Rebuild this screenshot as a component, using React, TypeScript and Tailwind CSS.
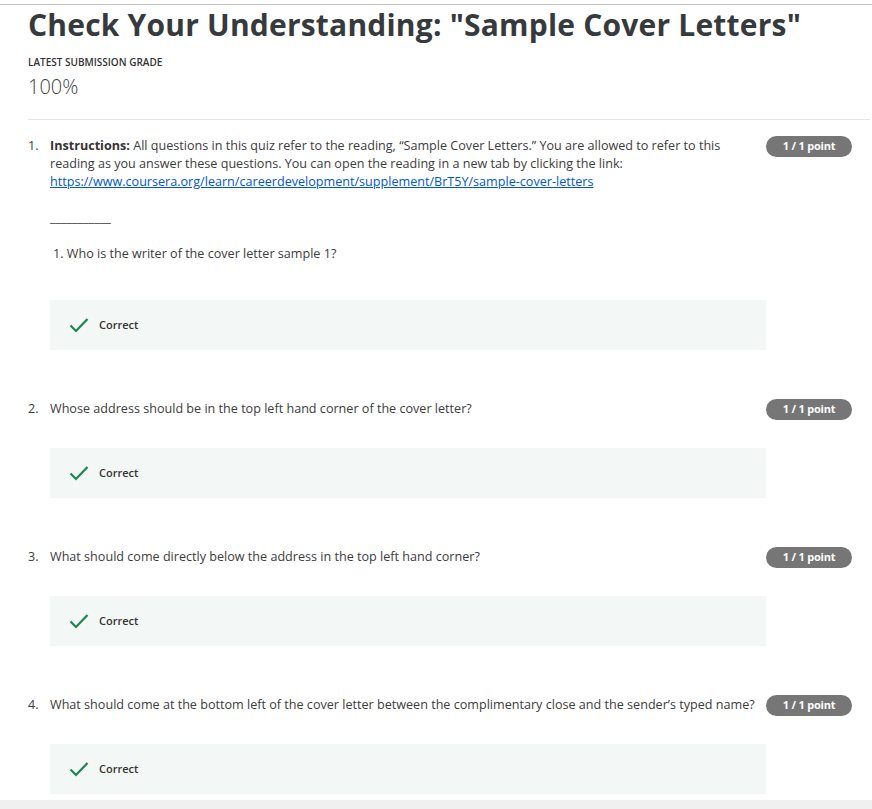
import React from "react";

const Check = () => (
  <svg width="20" height="16" viewBox="0 0 20 16" fill="none">
    <path d="M1.5 8.5 L7 14 L18.5 2" stroke="#1f8354" strokeWidth="2.2" />
  </svg>
);

const Badge = () => (
  <div className="shrink-0 w-[86px] h-[21px] rounded-full bg-[#767676] text-white text-[11px] font-bold flex items-center justify-center tracking-[-0.2px]">
    1 / 1 point
  </div>
);

const CorrectBox = () => (
  <div className="mt-[30px] h-[50px] bg-[#f3f8f6] flex items-center pl-[19px]">
    <Check />
    <span className="ml-[10px] text-[11px] font-semibold text-[#333]">Correct</span>
  </div>
);

const Question = ({ num, children }: { num: number; children: React.ReactNode }) => (
  <div className="flex items-start">
    <div className="w-[22px] shrink-0 pt-[1px] text-[12.6px] leading-[18px]">{num}.</div>
    <div className="w-[716px] shrink-0">
      <div className="text-[12.6px] leading-[18px] pt-[1px] pr-[8px]">{children}</div>
      <CorrectBox />
    </div>
    <Badge />
  </div>
);

const App = () => {
  const questions = [
    "Whose address should be in the top left hand corner of the cover letter?",
    "What should come directly below the address in the top left hand corner?",
    "What should come at the bottom left of the cover letter between the complimentary close and the sender’s typed name?",
  ];

  return (
    <div className="min-h-[809px] bg-white font-['Open_Sans',sans-serif] text-[#3c3c3c]">
      <div className="pt-[4px]">
        <div className="border-t border-[#c4c4c4]" />
      </div>
      <div className="pl-[28px] pr-[2px]">
        <h1 className="text-[30px] leading-[40px] font-bold text-[#373a3c] tracking-[0.2px]">
          Check Your Understanding: "Sample Cover Letters"
        </h1>
        <div className="mt-[10px] text-[10px] font-semibold uppercase text-[#333]">
          Latest Submission Grade
        </div>
        <div className="mt-[4px] text-[20px] leading-[26px] font-light text-[#444]">100%</div>
        <div className="mt-[19px] border-t border-[#e5e5e5]" />

        <div className="mt-[16px] flex flex-col gap-[49px] pb-[6px]">
          <Question num={1}>
            <p>
              <b className="font-bold text-[#333]">Instructions:</b> All questions in this quiz refer to the reading,
              “Sample Cover Letters.” You are allowed to refer to this reading as you answer these questions. You can
              open the reading in a new tab by clicking the link:{" "}
              <a className="text-[#0056d2] underline" href="#">
                https://www.coursera.org/learn/careerdevelopment/supplement/BrT5Y/sample-cover-letters
              </a>
            </p>
            <p className="mt-[18px]">___________</p>
            <p className="mt-[18px] pb-[7px] pl-[3px]">1. Who is the writer of the cover letter sample 1?</p>
          </Question>
          {questions.map((q, i) => (
            <Question key={i} num={i + 2}>
              {q}
            </Question>
          ))}
        </div>
      </div>
      <div className="h-[20px] bg-[#f0f0f0]" />
    </div>
  );
};

export default App;
